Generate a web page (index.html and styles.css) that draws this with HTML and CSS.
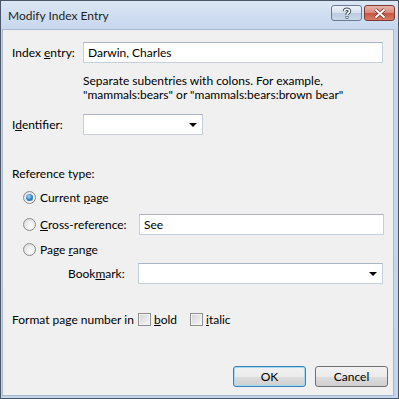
FILE: index.html
```html
<!DOCTYPE html>
<html lang="en">
<head>
  <meta charset="UTF-8">
  <title>Modify Index Entry</title>
  <link rel="stylesheet" href="styles.css">
</head>
<body>

  <div class="window">
    <!-- title bar -->
    <div class="titlebar">
      <span class="title">Modify Index Entry</span>
      <div class="caption-btns">
        <span class="cap help">
          <svg width="12" height="12" viewBox="0 0 12 12">
            <path d="M3.5 4.2 C3.5 1.5 8.5 1.5 8.5 4.2 C8.5 6 6 6 6 7.8" fill="none" stroke="#3b4a5e" stroke-width="3.4"/>
            <path d="M3.5 4.2 C3.5 1.5 8.5 1.5 8.5 4.2 C8.5 6 6 6 6 7.8" fill="none" stroke="#fff" stroke-width="1.6"/>
            <rect x="4.6" y="9" width="2.8" height="2.8" fill="#3b4a5e"/>
            <rect x="5.2" y="9.6" width="1.6" height="1.6" fill="#fff"/>
          </svg>
        </span>
        <span class="cap close">
          <svg width="14" height="11" viewBox="0 0 14 11">
            <path d="M2.5 1.5 L11.5 9.5 M11.5 1.5 L2.5 9.5" stroke="#7a2a22" stroke-width="3.6"/>
            <path d="M2.5 1.5 L11.5 9.5 M11.5 1.5 L2.5 9.5" stroke="#fff" stroke-width="2"/>
          </svg>
        </span>
      </div>
    </div>

    <!-- dialog body -->
    <div class="client">
      <div class="row r-entry">
        <span class="lbl">Index <u>e</u>ntry:</span>
        <span class="field f-entry">Darwin, Charles</span>
      </div>
      <p class="hint">Separate subentries with colons. For example,<br>"mammals:bears" or "mammals:bears:brown bear"</p>

      <div class="row r-ident">
        <span class="lbl">I<u>d</u>entifier:</span>
        <span class="field combo f-ident"><span class="arrow"></span></span>
      </div>

      <div class="group-title">Reference type:</div>

      <div class="opt r-current">
        <span class="radio on"></span>
        <span>Current <u>p</u>age</span>
      </div>
      <div class="opt r-cross">
        <span class="radio"></span>
        <span class="opt-lbl"><u>C</u>ross-reference:</span>
        <span class="field f-cross">See</span>
      </div>
      <div class="opt r-range">
        <span class="radio"></span>
        <span>Page <u>r</u>ange</span>
      </div>
      <div class="row r-bookmark">
        <span class="lbl-sub">Book<u>m</u>ark:</span>
        <span class="field combo f-bookmark"><span class="arrow"></span></span>
      </div>

      <div class="row r-format">
        <span class="fmt-lbl">Format page number in</span>
        <span class="check"></span><span class="chk-lbl"><u>b</u>old</span>
        <span class="check"></span><span class="chk-lbl"><u>i</u>talic</span>
      </div>

      <div class="buttons">
        <span class="btn default">OK</span>
        <span class="btn">Cancel</span>
      </div>
    </div>
  </div>

</body>
</html>
```

FILE: styles.css
```css
body { margin: 0; font-family: "Segoe UI", Lato, "Noto Sans", sans-serif; font-size: 12px; color: #000; }
u { text-decoration: underline; text-underline-offset: 1px; }

.window { width: 399px; height: 399px; box-sizing: border-box; border: 1px solid #4a5566; padding: 0 4px 2px 1px; background: linear-gradient(#dbe6f4, #c5d6ec 30px, #c3d5ec); display: flex; flex-direction: column; overflow: hidden; }

.titlebar { height: 28px; flex-shrink: 0; display: flex; align-items: flex-start; }
.title { padding: 7px 0 0 6px; line-height: 16px; color: #1e1e1e; flex: 1; }
.caption-btns { display: flex; gap: 2px; margin-top: 4px; margin-right: -1px; }
.cap { height: 14px; box-sizing: content-box; border: 1px solid #6d7a8d; border-radius: 3px; display: flex; align-items: center; justify-content: center; }
.help { width: 29px; background: linear-gradient(#eef3fa, #d5e0ee 50%, #bccbe0 51%, #cad8ea); }
.close { width: 29px; border-color: #7c3a33; background: linear-gradient(#eab3ab, #d9877b 50%, #c75442 51%, #d77a63); }

.client { flex: 1; min-height: 0; background: #f0f0f0; border: 1px solid #a9b8ca; padding: 12px 0 0 9px; }

.row { display: flex; align-items: center; }
.lbl { width: 71px; }
.field { height: 21px; box-sizing: border-box; background: #fff; border: 1px solid #c6d0dc; border-top-color: #abb4c2; padding: 0 4px; line-height: 19px; display: flex; align-items: center; }
.f-entry { width: 300px; }
.hint { margin: 11px 0 0 71px; line-height: 14px; }

.r-ident { margin-top: 12px; }
.combo { justify-content: flex-end; padding-right: 5px; }
.f-ident { width: 120px; }
.arrow { width: 0; height: 0; border-left: 4px solid transparent; border-right: 4px solid transparent; border-top: 4px solid #000; }

.group-title { margin-top: 31px; line-height: 15px; }
.opt { display: flex; align-items: center; padding-left: 11px; line-height: 15px; }
.r-current { margin-top: 9px; }
.r-cross { margin-top: 9px; }
.r-range { margin-top: 7px; }
.opt-lbl { width: 99px; }
.f-cross { width: 245px; }

.radio { width: 13px; height: 13px; box-sizing: border-box; border-radius: 50%; border: 1px solid #8c8c8c; margin-right: 4px; background: radial-gradient(circle at 60% 65%, #fff, #e2e2e2 70%, #cfcfcf); position: relative; }
.radio.on::after { content: ""; position: absolute; left: 2px; top: 2px; width: 7px; height: 7px; border-radius: 50%; background: radial-gradient(circle at 40% 35%, #a6d7f5, #2b83c3 55%, #14507f); }

.r-bookmark { margin-top: 6px; }
.lbl-sub { width: 70px; padding-left: 56px; }
.f-bookmark { width: 245px; }

.r-format { margin-top: 28px; line-height: 15px; }
.fmt-lbl { width: 126px; white-space: nowrap; }
.check { width: 13px; height: 13px; box-sizing: border-box; border: 1px solid #8e8f8f; background: linear-gradient(135deg, #d4d4d4, #f7f7f7); box-shadow: inset 0 0 0 1px #f4f4f4; margin-right: 3px; }
.chk-lbl { width: 36px; }

.buttons { display: flex; justify-content: flex-end; gap: 9px; margin-top: 39px; padding-right: 5px; }
.btn { width: 73px; height: 21px; box-sizing: border-box; border: 1px solid #707070; border-radius: 3px; background: linear-gradient(#f2f2f2, #ebebeb 50%, #dddddd 51%, #cfcfcf); display: flex; align-items: center; justify-content: center; }
.btn.default { border-color: #3c7fb1; box-shadow: inset 0 0 0 1px #9fdcf6; }
```
